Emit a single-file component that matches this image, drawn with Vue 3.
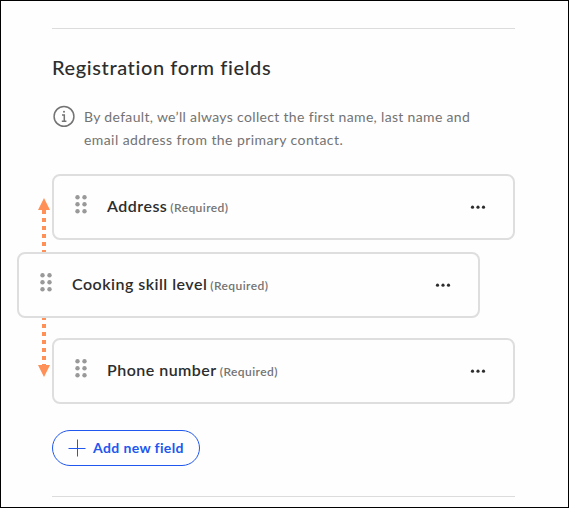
<template>
    <main class="panel">
        <section class="section">
            <h2 class="section__title">Registration form fields</h2>
            <div class="hint">
                <svg class="hint__icon" viewBox="0 0 24 24" width="24" height="24" aria-hidden="true">
                    <circle cx="12" cy="12.4" r="9.9" />
                    <path d="M10 11h2.3v6M9.8 17.2h4.6" />
                    <circle class="hint__dot" cx="12" cy="7.8" r="1" />
                </svg>
                <p class="hint__text">
                    <span class="hint__line">By default, we’ll always collect the first name, last name and</span>
                    <span class="hint__line hint__line--last">email address from the primary contact.</span>
                </p>
            </div>

            <div class="fields">
                <svg class="fields__arrow" viewBox="0 0 12 179" width="12" height="179" aria-hidden="true">
                    <path class="fields__track" d="M6 12V88" />
                    <path class="fields__track" d="M6 118V170" />
                    <path d="M6 0L12 12H0zM0 167H12L6 179z" />
                </svg>
                <div v-for="field in fields" :key="field.id"
                    :class="['field', field.dragging ? 'field--dragging' : null]">
                    <svg class="field__handle" viewBox="0 0 12 19" width="12" height="19" aria-hidden="true">
                        <template v-for="y in [2.2, 9.2, 16.2]" :key="y">
                            <circle cx="2.5" :cy="y" r="2.2" />
                            <circle cx="9.5" :cy="y" r="2.2" />
                        </template>
                    </svg>
                    <span class="field__name">{{ field.name }}</span>
                    <span class="field__required">(Required)</span>
                    <button class="field__menu" title="More options">
                        <svg viewBox="0 0 16 4" width="16" height="4">
                            <circle cx="2.5" cy="2.2" r="1.6" />
                            <circle cx="8" cy="2.2" r="1.6" />
                            <circle cx="13.5" cy="2.2" r="1.6" />
                        </svg>
                    </button>
                </div>
            </div>

            <button class="add">
                <svg class="add__icon" viewBox="0 0 18 18" width="18" height="18" aria-hidden="true">
                    <path d="M9.5 0.5V17.5M0.5 9.5H17.5" />
                </svg>
                <span class="add__label">Add new field</span>
            </button>
        </section>
    </main>
</template>

<script setup>
const fields = [
    { id: 'address', name: 'Address', dragging: false },
    { id: 'cooking', name: 'Cooking skill level', dragging: true },
    { id: 'phone', name: 'Phone number', dragging: false }
]
</script>

<style>
body {
    margin: 0;
    background-color: #fff;
}
</style>

<style scoped>
.panel {
    box-sizing: border-box;
    width: 569px;
    height: 508px;
    padding: 27px 53px 0 51px;
    border: 1px solid #000;
    background-color: #fefefe;
    font-family: Lato, "Liberation Sans", sans-serif;
    color: #2d2d2d;
}

.section {
    box-sizing: border-box;
    width: 463px;
    height: 469px;
    border-top: 1px solid #dcdcdc;
    border-bottom: 1px solid #dcdcdc;
}

.section__title {
    margin: 26px 0 0;
    font-size: 20px;
    line-height: 24px;
    font-weight: 500;
    letter-spacing: 0.6px;
    white-space: nowrap;
}

.hint {
    display: flex;
    gap: 8px;
    margin-top: 25px;
    color: #737373;
}

.hint__icon {
    flex: none;
    fill: none;
    stroke: currentColor;
    stroke-width: 1.5;
}

.hint__icon .hint__dot {
    fill: currentColor;
    stroke: none;
}

.hint__text {
    margin: 1px 0 0;
    font-size: 14px;
    line-height: 23px;
    letter-spacing: 0.33px;
    white-space: nowrap;
}

.hint__line {
    display: block;
}

.hint__line--last {
    letter-spacing: 0.42px;
}

.fields {
    position: relative;
    display: flex;
    flex-direction: column;
    margin-top: 23px;
}

.fields__arrow {
    position: absolute;
    top: 24px;
    left: -14px;
    fill: #ff9057;
}

.fields__track {
    fill: none;
    stroke: #ff9057;
    stroke-width: 4;
    stroke-dasharray: 4 4;
}

.field {
    box-sizing: border-box;
    display: flex;
    align-items: center;
    width: 463px;
    height: 66px;
    padding: 0 27px 0 21px;
    border: 2px solid #dedede;
    border-radius: 8px;
    background-color: #fefefe;
}

.field--dragging {
    z-index: 1;
    margin: 12px 0 20px -35px;
}

.field__handle {
    margin: 0 20px 6px 0;
    fill: #999;
}

.field__name {
    margin-bottom: 2px;
    font-size: 16px;
    line-height: 24px;
    font-weight: 600;
    letter-spacing: 0.48px;
    white-space: nowrap;
}

.field__required {
    margin: 2px 0 0 3px;
    font-size: 12px;
    line-height: 16px;
    font-weight: 600;
    letter-spacing: 0.42px;
    color: #737373;
}

.field__menu {
    display: flex;
    margin-left: auto;
    padding: 0;
    border: 0;
    background-color: transparent;
    fill: #2d2d2d;
    cursor: pointer;
}

.add {
    box-sizing: border-box;
    display: flex;
    align-items: center;
    width: 148px;
    height: 36px;
    margin-top: 26px;
    padding: 0 0 0 15px;
    border: 1px solid #2057ee;
    border-radius: 18px;
    background-color: #fefefe;
    color: #2057ee;
    font-family: inherit;
    cursor: pointer;
}

.add__icon {
    fill: none;
    stroke: currentColor;
}

.add__label {
    margin-left: 7px;
    font-size: 14px;
    line-height: 20px;
    font-weight: 700;
    letter-spacing: 0.38px;
    white-space: nowrap;
}
</style>
